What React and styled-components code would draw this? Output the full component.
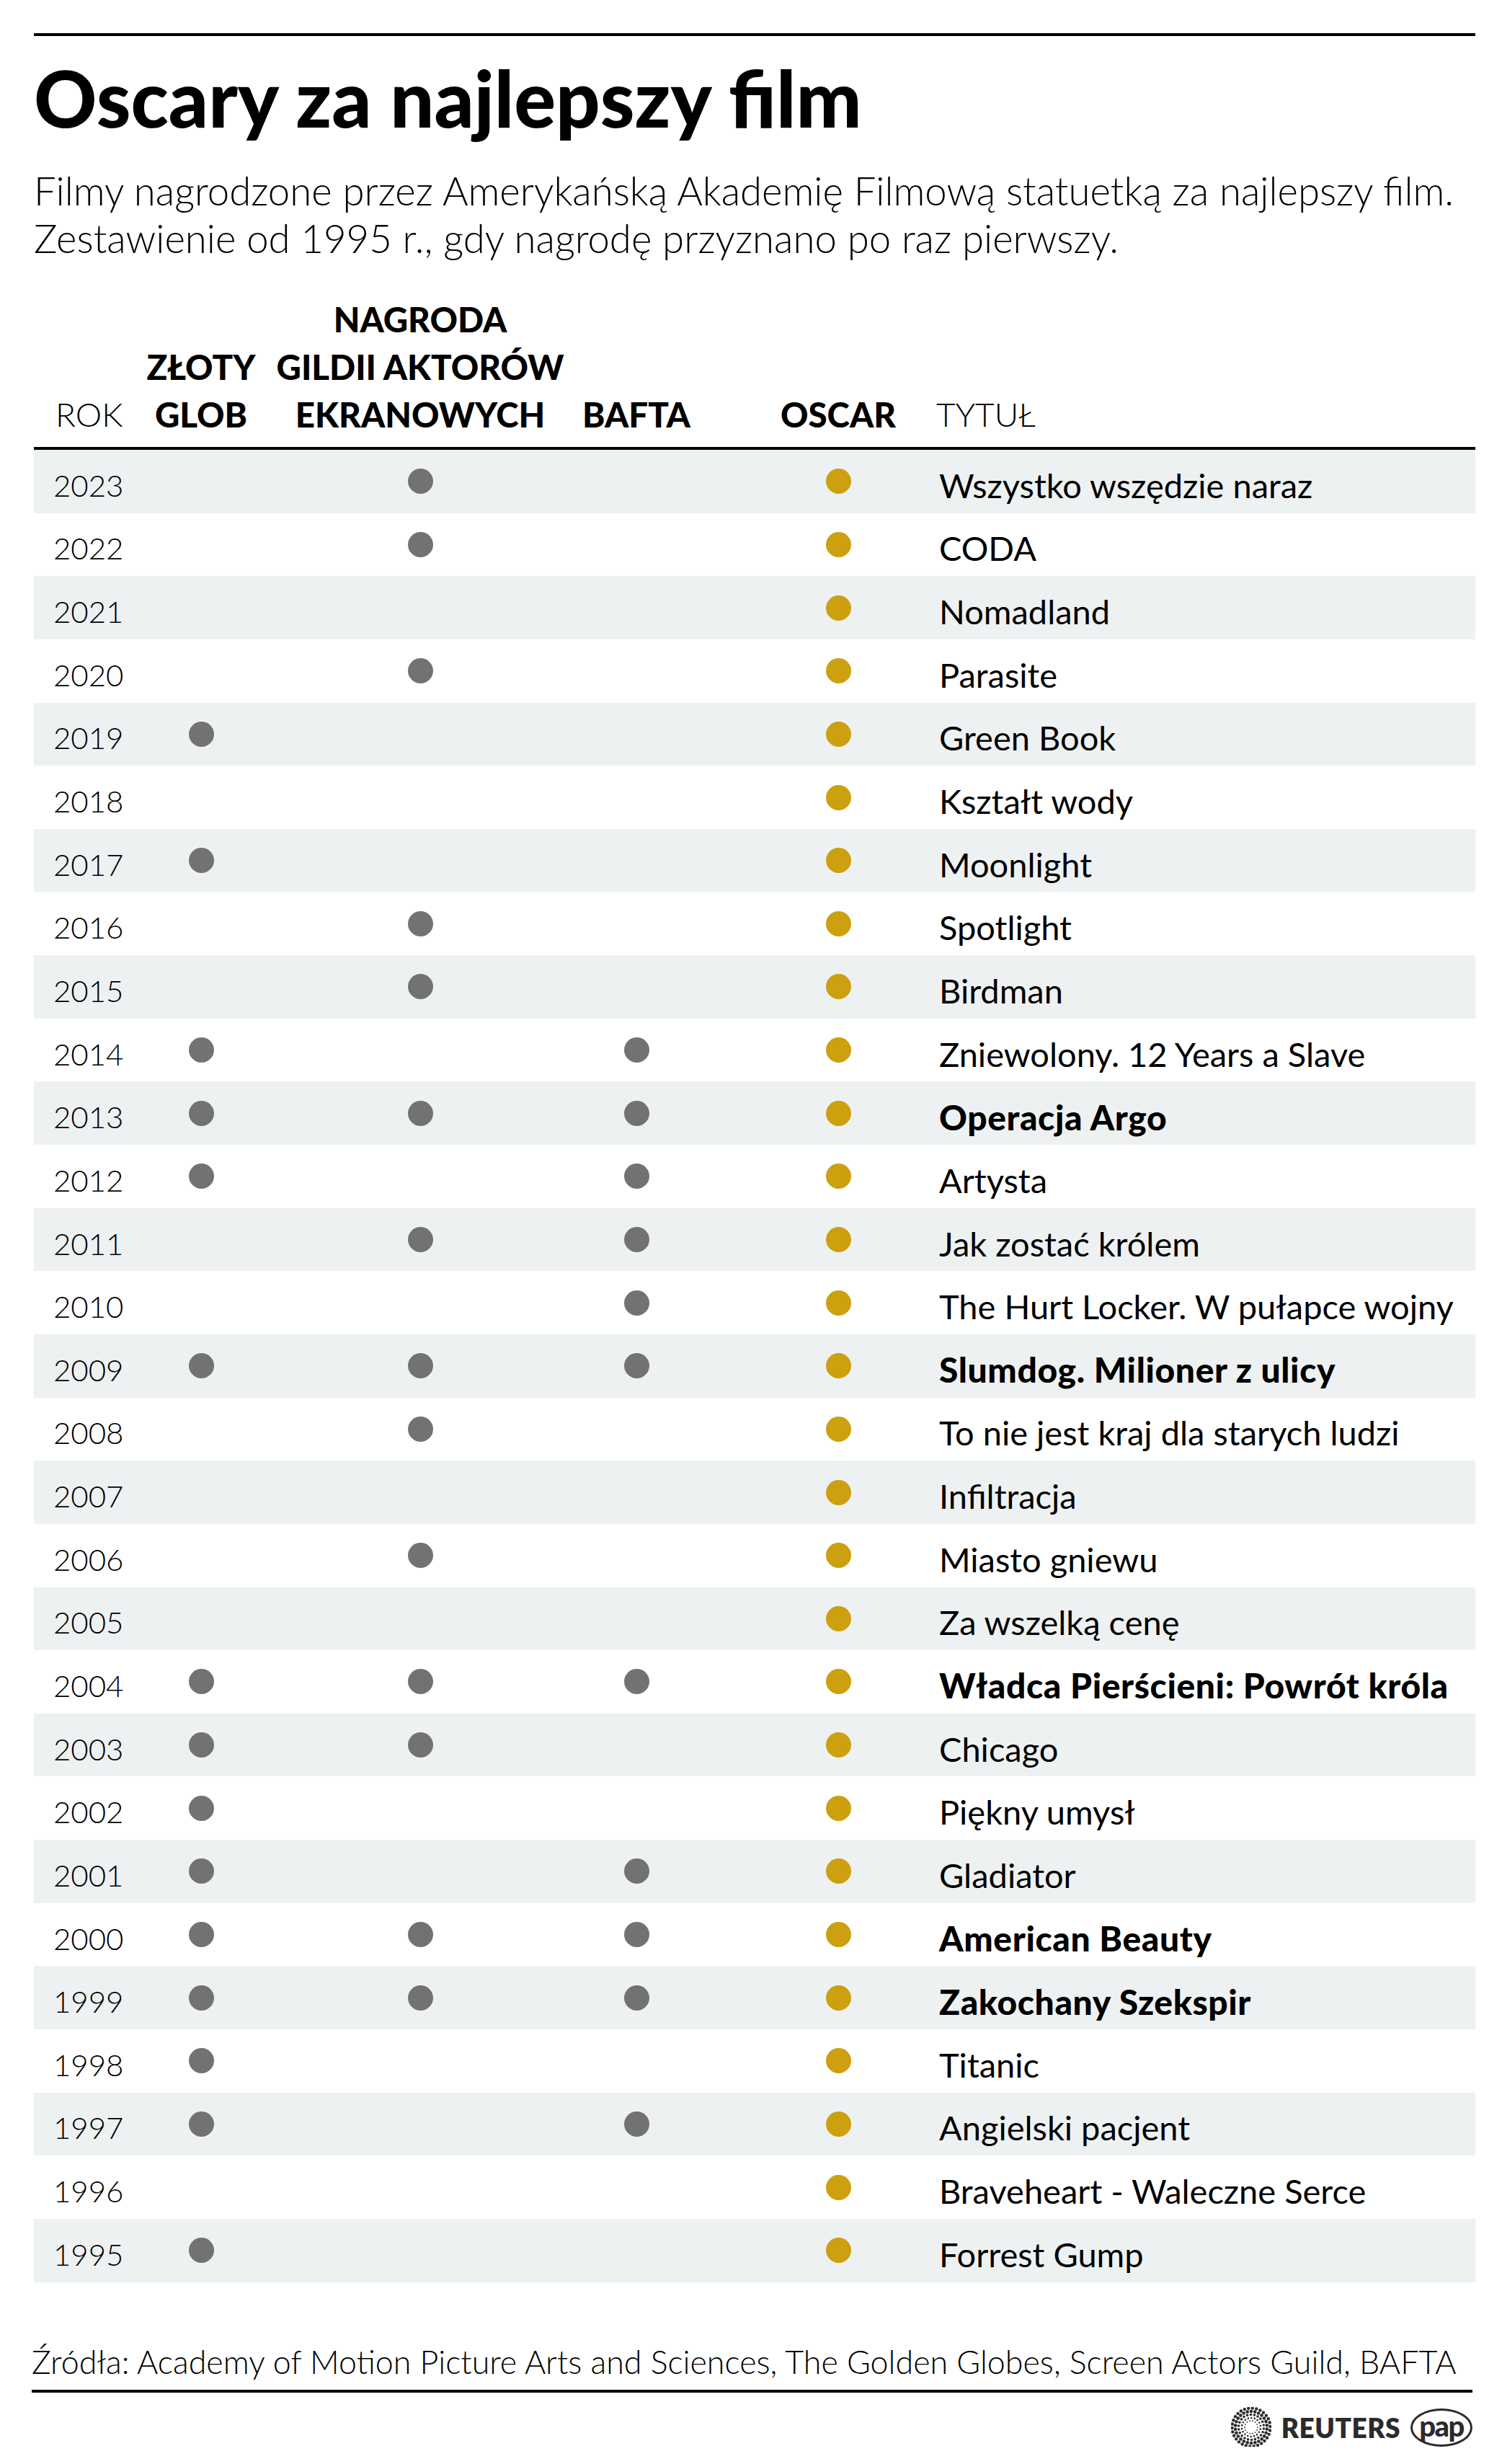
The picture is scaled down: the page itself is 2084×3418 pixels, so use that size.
import React from 'react';
import styled, { createGlobalStyle } from 'styled-components';

const GlobalStyle = createGlobalStyle`
  html, body {
    margin: 0;
    padding: 0;
    background: #fff;
  }
  body {
    font-family: Lato, "Open Sans", sans-serif;
    color: #000;
  }
`;

const COLS = '152px 160px 448px 152px 64px 280px 1fr';

const Page = styled.div`
  width: 2000px;
  margin-left: 47px;
  padding-top: 46px;
`;

const Rule = styled.div`
  height: 4px;
  background: #000;
`;

const Title = styled.h1`
  margin: 35px 0 0;
  font-size: 108px;
  line-height: 100px;
  font-weight: 900;
`;

const Lead = styled.p`
  margin: 46px 0 0;
  font-size: 54.5px;
  line-height: 66px;
  font-weight: 300;
`;

const Table = styled.div`
  margin-top: 47px;
`;

const HeadRow = styled.div`
  display: grid;
  grid-template-columns: ${COLS};
  align-items: end;
  padding-bottom: 12px;
  border-bottom: 4px solid #000;
`;

const HeadCell = styled.div`
  grid-column: ${p => p.$col};
  font-size: ${p => (p.$light ? 46 : 47.5)}px;
  font-weight: ${p => (p.$light ? 300 : 900)};
  line-height: 66px;
  text-align: ${p => (p.$left ? 'left' : 'center')};
  padding-left: ${p => p.$pad || 0}px;
  margin-left: ${p => p.$shift || 0}px;
  white-space: nowrap;
`;

const Row = styled.div`
  display: grid;
  grid-template-columns: ${COLS};
  align-items: center;
  height: 87.65px;
  background: ${p => (p.$shade ? '#eef1f2' : '#fff')};
`;

const Year = styled.div`
  grid-column: 1;
  padding-left: 27px;
  padding-top: 10px;
  font-size: 42px;
  font-weight: 300;
`;

const DotCell = styled.div`
  grid-column: ${p => p.$col};
  display: flex;
  justify-content: center;
`;

const Dot = styled.span`
  width: 35px;
  height: 35px;
  border-radius: 50%;
  background: ${p => (p.$gold ? '#cca00f' : '#727272')};
`;

const Film = styled.div`
  grid-column: 7;
  padding-top: 10px;
  font-size: ${p => (p.$bold ? 48 : 47)}px;
  font-weight: ${p => (p.$bold ? 900 : 400)};
  letter-spacing: ${p => (p.$bold ? 0.6 : 0)}px;
  white-space: nowrap;
`;

const Footer = styled.div`
  margin-left: -3px;
  width: 1999px;
`;

const Source = styled.p`
  margin: 85px 0 0;
  font-size: 44.8px;
  line-height: 50px;
  font-weight: 300;
`;

const BottomRule = styled.div`
  margin-top: 14px;
  height: 4px;
  background: #000;
`;

const Logos = styled.div`
  display: flex;
  justify-content: flex-end;
  align-items: center;
  gap: 14px;
  margin-top: 22px;
  height: 53px;
`;

const ReutersMark = styled.div`
  display: flex;
  align-items: center;
  gap: 14px;
`;

const ReutersText = styled.span`
  font-size: 37px;
  font-weight: 800;
  color: #2b2b2b;
  letter-spacing: 0.5px;
`;

const Pap = styled.span`
  display: flex;
  align-items: center;
  justify-content: center;
  width: 80px;
  height: 43px;
  padding-bottom: 4px;
  border: 3px solid #2b2b2b;
  border-radius: 50%;
  font-size: 40px;
  font-weight: 900;
  line-height: 1;
  letter-spacing: -1.5px;
  color: #2b2b2b;
`;

const films = [
  [2023, 0, 1, 0, 'Wszystko wszędzie naraz'],
  [2022, 0, 1, 0, 'CODA'],
  [2021, 0, 0, 0, 'Nomadland'],
  [2020, 0, 1, 0, 'Parasite'],
  [2019, 1, 0, 0, 'Green Book'],
  [2018, 0, 0, 0, 'Kształt wody'],
  [2017, 1, 0, 0, 'Moonlight'],
  [2016, 0, 1, 0, 'Spotlight'],
  [2015, 0, 1, 0, 'Birdman'],
  [2014, 1, 0, 1, 'Zniewolony. 12 Years a Slave'],
  [2013, 1, 1, 1, 'Operacja Argo'],
  [2012, 1, 0, 1, 'Artysta'],
  [2011, 0, 1, 1, 'Jak zostać królem'],
  [2010, 0, 0, 1, 'The Hurt Locker. W pułapce wojny'],
  [2009, 1, 1, 1, 'Slumdog. Milioner z ulicy'],
  [2008, 0, 1, 0, 'To nie jest kraj dla starych ludzi'],
  [2007, 0, 0, 0, 'Infiltracja'],
  [2006, 0, 1, 0, 'Miasto gniewu'],
  [2005, 0, 0, 0, 'Za wszelką cenę'],
  [2004, 1, 1, 1, 'Władca Pierścieni: Powrót króla'],
  [2003, 1, 1, 0, 'Chicago'],
  [2002, 1, 0, 0, 'Piękny umysł'],
  [2001, 1, 0, 1, 'Gladiator'],
  [2000, 1, 1, 1, 'American Beauty'],
  [1999, 1, 1, 1, 'Zakochany Szekspir'],
  [1998, 1, 0, 0, 'Titanic'],
  [1997, 1, 0, 1, 'Angielski pacjent'],
  [1996, 0, 0, 0, 'Braveheart - Waleczne Serce'],
  [1995, 1, 0, 0, 'Forrest Gump'],
];

// reuters dotted disc: rings get bigger dots towards the edge
const ReutersDots = () => {
  const rings = [
    { r: 9, n: 14, d: 0.9 },
    { r: 13, n: 18, d: 1.3 },
    { r: 17.5, n: 22, d: 1.8 },
    { r: 22, n: 26, d: 2.3 },
    { r: 26.5, n: 30, d: 2.2 },
  ];
  const dots = [];
  rings.forEach((ring, i) => {
    for (let k = 0; k < ring.n; k++) {
      const a = (k / ring.n) * Math.PI * 2 + i * 0.2;
      dots.push(
        <circle
          key={`${i}-${k}`}
          cx={28 + ring.r * Math.cos(a)}
          cy={28 + ring.r * Math.sin(a)}
          r={ring.d}
          fill="#2b2b2b"
        />
      );
    }
  });
  return (
    <svg width="56" height="56" viewBox="0 0 56 56">
      {dots}
    </svg>
  );
};

const App = () => {
  return (
    <>
      <GlobalStyle />
      <Page>
        <Rule />
        <Title>Oscary za najlepszy film</Title>
        <Lead>
          Filmy nagrodzone przez Amerykańską Akademię Filmową statuetką za najlepszy film.
          <br />
          Zestawienie od 1995 r., gdy nagrodę przyznano po raz pierwszy.
        </Lead>

        <Table>
          <HeadRow>
            <HeadCell $col={1} $light $left $pad={30}>ROK</HeadCell>
            <HeadCell $col={2}>ZŁOTY<br />GLOB</HeadCell>
            <HeadCell $col={3}>NAGRODA<br />GILDII AKTORÓW<br />EKRANOWYCH</HeadCell>
            <HeadCell $col={4}>BAFTA</HeadCell>
            <HeadCell $col={6}>OSCAR</HeadCell>
            <HeadCell $col={7} $light $left $shift={-4}>TYTUŁ</HeadCell>
          </HeadRow>

          {films.map(([year, glob, sag, bafta, title], i) => (
            <Row key={year} $shade={i % 2 === 0}>
              <Year>{year}</Year>
              {glob ? <DotCell $col={2}><Dot /></DotCell> : null}
              {sag ? <DotCell $col={3}><Dot /></DotCell> : null}
              {bafta ? <DotCell $col={4}><Dot /></DotCell> : null}
              <DotCell $col={6}><Dot $gold /></DotCell>
              <Film $bold={glob && sag && bafta}>{title}</Film>
            </Row>
          ))}
        </Table>

        <Footer>
          <Source>
            Źródła: Academy of Motion Picture Arts and Sciences, The Golden Globes, Screen Actors Guild, BAFTA
          </Source>
          <BottomRule />
          <Logos>
            <ReutersMark>
              <ReutersDots />
              <ReutersText>REUTERS</ReutersText>
            </ReutersMark>
            <Pap>pap</Pap>
          </Logos>
        </Footer>
      </Page>
    </>
  );
};

export default App;
